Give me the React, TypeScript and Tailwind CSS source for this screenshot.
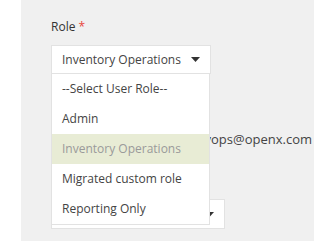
import React from "react";

const roles = [
  "--Select User Role--",
  "Admin",
  "Inventory Operations",
  "Migrated custom role",
  "Reporting Only",
];

const Caret = () => (
  <svg width="9" height="5" viewBox="0 0 9 5" className="shrink-0">
    <path d="M0 0h9L4.5 5z" fill="#333" />
  </svg>
);

export default function App() {
  return (
    <div
      className="flex h-[241px] w-[314px] overflow-hidden bg-white text-[12px] text-[#333]"
      style={{ fontFamily: "'Open Sans', sans-serif" }}
    >
      <div className="w-[21px] shrink-0 bg-white" />
      <div className="relative flex-1 bg-[#f0f0f0] pl-[30px] pt-[18px]">
        {/* role label */}
        <p className="mb-[9px] leading-[18px]">
          Role <span className="text-[#e8453c]">*</span>
        </p>

        <div className="relative">
          {/* select */}
          <div className="flex h-[29px] w-[160px] items-center justify-between whitespace-nowrap border border-[#e2e2e2] bg-white pl-[10px] pr-[10px] text-[#444]">
            <span>Inventory Operations</span>
            <Caret />
          </div>

          {/* content behind the menu */}
          <div className="mt-[55px] whitespace-nowrap pr-[2px] text-right text-[13px] leading-[20px] text-[#444]">
            inventoryops@openx.com
          </div>
          <div className="mt-[50px] flex h-[30px] w-[174px] items-center justify-end border border-[#e2e2e2] bg-white pr-[10px]">
            <Caret />
          </div>

          {/* open menu */}
          <ul className="absolute left-0 top-[29px] w-[159px] whitespace-nowrap border border-t-0 border-[#e2e2e2] bg-white text-[#444]">
            {roles.map((r) => (
              <li
                key={r}
                className={
                  r === "Inventory Operations"
                    ? "flex h-[30px] items-center bg-[#e8ecd5] pl-[10px] text-[#9a9a9a]"
                    : "flex h-[30px] items-center pl-[10px]"
                }
              >
                {r}
              </li>
            ))}
          </ul>
        </div>
      </div>
    </div>
  );
}
